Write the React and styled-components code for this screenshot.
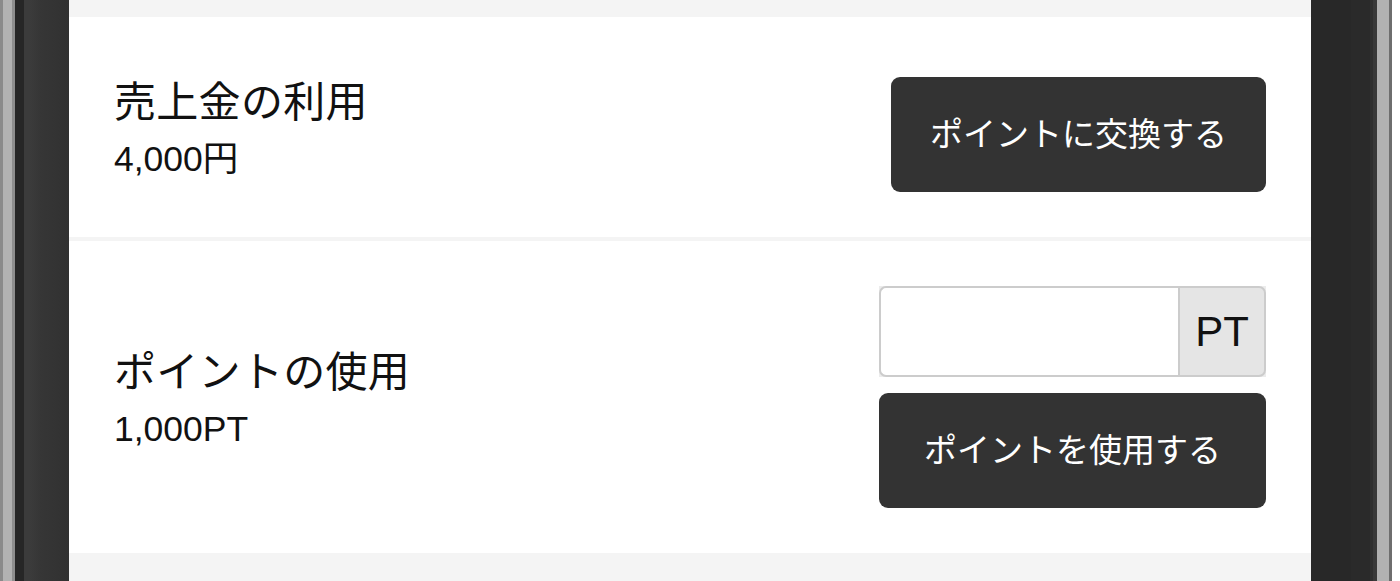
import React, { useState } from "react";
import styled, { createGlobalStyle } from "styled-components";

const GlobalStyle = createGlobalStyle`
  html, body {
    margin: 0;
    padding: 0;
    background: #ffffff;
  }
  body {
    font-family: "Liberation Sans", "Noto Sans CJK JP", sans-serif;
    color: #111;
  }
`;

const Device = styled.div`
  display: flex;
  width: 1400px;
  height: 581px;
  overflow: hidden;
`;

const LeftBezel = styled.div`
  width: 69px;
  flex-shrink: 0;
  background: linear-gradient(
    to right,
    #8a8a8a 0 3px,
    #b2b2b2 3px 12px,
    #8e8e8e 12px 15px,
    #262626 15px 24px,
    #3b3b3b 24px 30px,
    #363636 40px,
    #313131 69px
  );
`;

const RightBezel = styled.div`
  width: 89px;
  flex-shrink: 0;
  background: linear-gradient(
    to right,
    #282828 0 40px,
    #2a2a2a 40px 59px,
    #303030 59px 62px,
    #3a3a3a 62px 66px,
    #b2b2b2 66px 78px,
    #6e6e6e 78px 81px,
    #ffffff 81px
  );
`;

const Screen = styled.main`
  flex: 1;
  background: #f4f4f4;
  padding-top: 17px;
  display: flex;
  flex-direction: column;
  gap: 4px;
`;

const Card = styled.section`
  background: #fff;
  padding: 45px 45px;
  display: flex;
  align-items: center;
  justify-content: space-between;
`;

const Info = styled.div`
  display: flex;
  flex-direction: column;
`;

const Title = styled.div`
  font-family: "Noto Sans CJK JP", sans-serif;
  font-size: 42px;
  line-height: 60px;
  color: #111;
  letter-spacing: 0.3px;
`;

const Amount = styled.div`
  font-family: "Liberation Sans", "Noto Sans CJK JP", sans-serif;
  font-size: 35.5px;
  line-height: 52px;
  margin-top: 4px;
  color: #111;
`;

const Actions = styled.div`
  width: 387px;
  display: flex;
  flex-direction: column;
  align-items: flex-end;
  gap: 16px;
`;

const DarkButton = styled.button`
  width: ${(p) => p.$width || "100%"};
  height: 115px;
  margin-top: ${(p) => p.$offset || 0};
  border: none;
  border-radius: 9px;
  background: #333333;
  color: #fff;
  font-family: "Noto Sans CJK JP", sans-serif;
  font-size: 33px;
  cursor: pointer;
  padding: 0 0 5px;
`;

const InputGroup = styled.div`
  width: 387px;
  height: 91px;
  display: flex;
  background: #ececec;
`;

const PointInput = styled.input`
  flex: 1;
  min-width: 0;
  box-sizing: border-box;
  height: 100%;
  border: 2px solid #cccccc;
  border-right: none;
  border-radius: 7px 0 0 7px;
  background: #fff;
  font-size: 34px;
  padding: 0 14px;
  outline: none;
`;

const Addon = styled.span`
  width: 88px;
  box-sizing: border-box;
  height: 100%;
  display: flex;
  align-items: center;
  justify-content: center;
  border: 2px solid #cccccc;
  border-radius: 0 7px 7px 0;
  background: #e5e5e5;
  font-family: "Liberation Sans", sans-serif;
  font-size: 42px;
  color: #111;
`;

export default function App() {
  const [points, setPoints] = useState("");

  return (
    <>
      <GlobalStyle />
      <Device>
        <LeftBezel />
        <Screen>
          <Card>
            <Info>
              <Title>売上金の利用</Title>
              <Amount>4,000円</Amount>
            </Info>
            <DarkButton $width="375px" $offset="15px">
              ポイントに交換する
            </DarkButton>
          </Card>
          <Card>
            <Info>
              <Title>ポイントの使用</Title>
              <Amount>1,000PT</Amount>
            </Info>
            <Actions>
              <InputGroup>
                <PointInput
                  value={points}
                  onChange={(e) => setPoints(e.target.value)}
                />
                <Addon>PT</Addon>
              </InputGroup>
              <DarkButton $width="387px">ポイントを使用する</DarkButton>
            </Actions>
          </Card>
        </Screen>
        <RightBezel />
      </Device>
    </>
  );
}
